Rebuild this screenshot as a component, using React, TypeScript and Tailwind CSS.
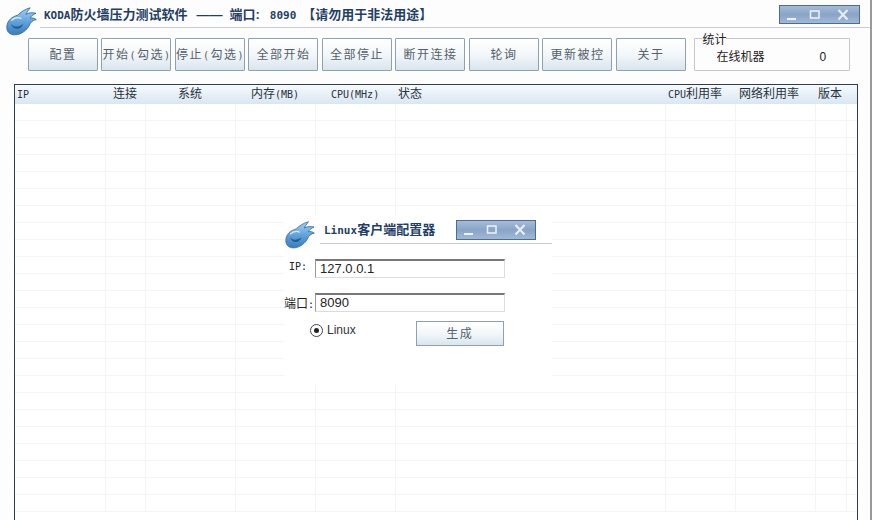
const SANS = '"Liberation Sans", "Noto Sans CJK SC", sans-serif';

const TOOLBAR = ['配置', '开始(勾选)', '停止(勾选)', '全部开始', '全部停止', '断开连接', '轮询', '更新被控', '关于'];
const COLUMNS: [string, number, number][] = [
  ['IP', 91, 2], ['连接', 40, 7], ['系统', 90, 32], ['内存(MB)', 80, 15], ['CPU(MHz)', 80, 15], ['状态', 270, 2],
  ['CPU利用率', 70, 2], ['网络利用率', 80, 3], ['版本', 31, 2], ['', 11, 0],
];
const ROWS = Array.from({ length: 24 }, (_, i) => i);

// Half-width Latin next to 12px CJK: Latin runs are set in a 6px-per-character mono face.
function Mixed({ text }: { text: string }) {
  const parts = text.split(/([\x20-\x7e]+)/).filter(Boolean);
  return (
    <>
      {parts.map((p, i) =>
        /^[\x20-\x7e]+$/.test(p) ? (
          <span key={i} className="font-['DejaVu_Sans_Mono'] text-[10px]">{p}</span>
        ) : (
          <span key={i}>{p}</span>
        ),
      )}
    </>
  );
}

function Logo({ className }: { className: string }) {
  return (
    <svg viewBox="0 0 32 30" className={className}>
      <defs>
        <linearGradient id="koda-body" x1="0" y1="0" x2="0" y2="1">
          <stop offset="0" stopColor="#a6d0f0" />
          <stop offset="0.55" stopColor="#5e9fda" />
          <stop offset="1" stopColor="#3a7cb8" />
        </linearGradient>
      </defs>
      <path
        d="M0.800 21C1 14 6 10 12 8.500C15 5.500 19 2.500 25 0.800C23 3.500 21.500 5.500 20.500 7.500C23.500 6 27 5.500 31 6.500C28 7.800 26 9.500 25 11.500C27 11 29.500 11.500 31.300 13C28.500 13.500 26.500 15 25 17C23 22.500 18 27 12 28.500C5.500 29.800 0.800 27 0.800 21Z"
        fill="url(#koda-body)"
        stroke="#2d6da8"
        strokeWidth="0.9"
      />
      <path d="M5 17.500C8 21 13 21 18 17.500C15 24 8 24.500 5 17.500Z" fill="#215c92" />
      <path d="M5.500 14C8.500 11 12.500 10.500 16 12" fill="none" stroke="#d8ecfb" strokeWidth="1.300" />
    </svg>
  );
}

function WindowControls({ className }: { className: string }) {
  return (
    <div className={`flex items-center border border-[#4a6c96] bg-gradient-to-b from-[#a4bcd9] via-[#8aa4c6] to-[#a0b9d8] ${className}`}>
      <svg width="12" height="12" viewBox="0 0 12 12"><path d="M1 10H10" stroke="#eef3f9" strokeWidth="2" /></svg>
      <svg className="ml-[11px]" width="12" height="12" viewBox="0 0 12 12"><rect x="1.500" y="2" width="8.500" height="7" fill="none" stroke="#eef3f9" strokeWidth="1.500" /></svg>
      <svg className="ml-[16px]" width="12" height="12" viewBox="0 0 12 12"><path d="M1.500 1L10.500 10.500M10.500 1L1.500 10.500" stroke="#e6edf5" strokeWidth="2.200" /></svg>
    </div>
  );
}

function ToolButton({ label }: { label: string }) {
  return (
    <button className="w-[70px] h-[33px] shrink-0 border border-[#8fa0ae] rounded-[1px] bg-gradient-to-b from-[#ffffff] via-[#f3f7fa] to-[#d9e5ee] text-[12px] text-[#55616b] tracking-[1.500px] whitespace-nowrap overflow-hidden">
      <Mixed text={label} />
    </button>
  );
}

function TextField({ value, children }: { value: string; children: React.ReactNode }) {
  return (
    <div className="flex items-start">
      <span className="w-[30px] text-right text-[12px] leading-[14px] text-[#222] whitespace-nowrap">{children}</span>
      <div className="ml-px w-[190px] h-[19px] border border-[#dcdcdc] border-t-2 border-t-[#777] border-l-[#999] pl-1 text-[13px] leading-[16px] text-[#222] bg-white">
        {value}
      </div>
    </div>
  );
}

export default function App() {
  return (
    <div className="relative w-[872px] h-[520px] overflow-hidden bg-white" style={{ fontFamily: SANS }}>
      <div className="h-full border-r-2 border-[#9a9a9a] bg-[#fdfdfd] flex flex-col">
        {/* title bar */}
        <header className="flex h-[28px] shrink-0 pl-[6px] items-start">
          <Logo className="w-[31px] h-[29px] mt-[7px] shrink-0 relative z-10" />
          <div className="flex flex-1 h-[28px] ml-[3px] pl-[4px] border-b border-[#c8ccd0]">
            <h1 className="mt-[7px] text-[13px] leading-[15px] font-bold text-[#1f3f66] whitespace-nowrap flex items-baseline">
              <span className="font-['DejaVu_Sans_Mono'] text-[11px]">KODA</span>
              <span>防火墙压力测试软件</span>
              <span className="ml-[9px]">——</span>
              <span className="ml-[7px]">端口:</span>
              <span className="ml-[10px] font-['DejaVu_Sans_Mono'] text-[11px]">8090</span>
              <span className="ml-[6px]">【请勿用于非法用途】</span>
            </h1>
            <WindowControls className="ml-auto mr-[10px] mt-[5px] w-[81px] h-[19px] pl-[6px]" />
          </div>
        </header>

        {/* toolbar and counters */}
        <div className="flex h-[56px] shrink-0 pl-[27.900px] pt-[10px] gap-[3.500px]">
          {TOOLBAR.map((t) => <ToolButton key={t} label={t} />)}
          <fieldset className="ml-[5px] -mt-[6px] w-[156px] h-[39px] border border-[#c4c8cc] rounded-[1px] pl-[7px] text-[12px] text-[#222]">
            <legend className="leading-[12px] px-0 relative top-[2px]">统计</legend>
            <div className="flex pl-[14px] pt-[6px] leading-[14px]">
              <span>在线机器</span>
              <span className="ml-[55px]">0</span>
            </div>
          </fieldset>
        </div>

        {/* machine table */}
        <div className="ml-[14px] mr-[12px] flex-1 border border-[#2f3f4a] border-b-0 bg-white overflow-hidden">
          <div className="flex h-[19px] bg-gradient-to-b from-[#f6fafd] to-[#d9e6f1] text-[12px] text-[#27323c]">
            {COLUMNS.map(([name, w, pad], i) => (
              <div key={i} style={{ width: w, paddingLeft: pad }} className="shrink-0 leading-[19px] whitespace-nowrap"><Mixed text={name} /></div>
            ))}
          </div>
          {ROWS.map((r) => (
            <div key={r} className="flex h-[17px] border-b border-[#f5f5f5]">
              {COLUMNS.map(([, w], i) => (
                <div key={i} style={{ width: w }} className="shrink-0 border-r border-[#f4f4f4]" />
              ))}
            </div>
          ))}
        </div>
      </div>

      {/* floating client-config dialog */}
      <section className="absolute left-[284px] top-[215px] w-[268px] h-[170px] bg-white">
        <Logo className="absolute left-[1px] top-[6px] w-[30px] h-[28px]" />
        <h2 className="absolute left-[40px] top-[7px] text-[13px] leading-[15px] font-bold text-[#1f3f66] whitespace-nowrap">
          <span className="font-['DejaVu_Sans_Mono'] text-[11px]">Linux</span>客户端配置器
        </h2>
        <WindowControls className="absolute left-[172px] top-[5px] w-[80px] h-[20px] pl-[6px]" />
        <div className="absolute left-[36px] top-[28px] right-0 h-px bg-[#c8ccd0]" />
        <div className="pt-[44px] flex flex-col gap-[15px]">
          <TextField value="127.0.0.1"><span className="pr-[7px] font-['DejaVu_Sans_Mono'] text-[10px]">IP:</span></TextField>
          <TextField value="8090"><span className="relative top-[4px]">端口<span className="font-['DejaVu_Sans_Mono'] text-[10px]">:</span></span></TextField>
        </div>
        <div className="flex items-start pl-[26px] mt-[9px]">
          <span className="mt-[3px] flex items-center justify-center w-[13px] h-[13px] rounded-full border border-[#444]">
            <span className="w-[5px] h-[5px] rounded-full bg-[#222]" />
          </span>
          <span className="mt-[3px] ml-[4px] text-[12px] leading-[13px] text-[#333]">Linux</span>
          <button className="ml-[60px] w-[88px] h-[25px] border border-[#8fa0ae] bg-gradient-to-b from-[#ffffff] via-[#f3f7fa] to-[#d9e5ee] text-[12px] text-[#55616b] tracking-[1.500px]">生成</button>
        </div>
      </section>
    </div>
  );
}
